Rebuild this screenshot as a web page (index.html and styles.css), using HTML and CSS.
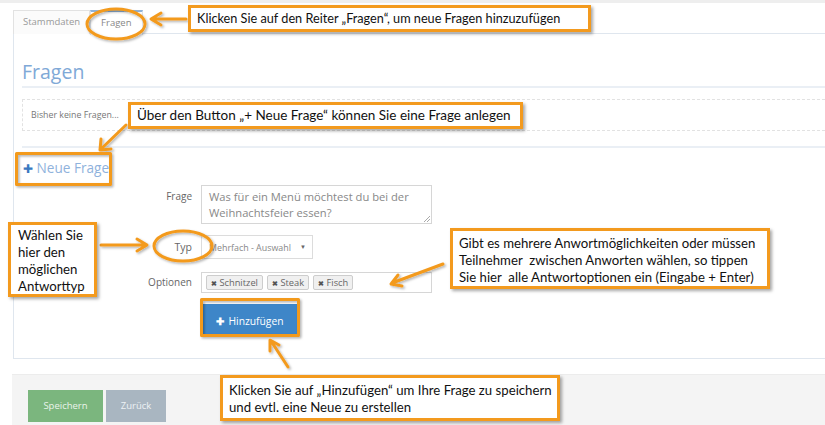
FILE: index.html
```html
<!DOCTYPE html>
<html lang="de">
<head>
<meta charset="utf-8">
<link rel="stylesheet" href="styles.css">
</head>
<body>
<div class="topstrip"></div>
<div class="page">
  <div class="tabs">
    <div class="tab">Stammdaten</div>
    <div class="tab active">Fragen</div>
  </div>
  <div class="panel">
    <h2 class="title">Fragen</h2>
    <div class="empty">Bisher keine Fragen...</div>
    <div class="sep"></div>
    <div class="newq"><span class="plus">✚</span> Neue Frage</div>
    <div class="form">
      <div class="row">
        <div class="label l-frage">Frage</div>
        <div class="textarea">Was für ein Menü möchtest du bei der<br>Weihnachtsfeier essen?<span class="grip"></span></div>
      </div>
      <div class="row">
        <div class="label l-typ">Typ</div>
        <div class="select"><span>Mehrfach - Auswahl</span><span class="caret">▼</span></div>
      </div>
      <div class="row">
        <div class="label l-opt">Optionen</div>
        <div class="tags">
          <span class="tag"><b>✖</b> Schnitzel</span>
          <span class="tag"><b>✖</b> Steak</span>
          <span class="tag"><b>✖</b> Fisch</span>
        </div>
      </div>
      <div class="row">
        <div class="label"></div>
        <div class="btn-add"><span class="bplus">✚</span> Hinzufügen</div>
      </div>
    </div>
  </div>
  <div class="footer">
    <div class="btn save">Speichern</div>
    <div class="btn back">Zurück</div>
  </div>
</div>

<svg class="overlay" width="825" height="425" viewBox="0 0 825 425">
  <defs>
    <filter id="sh" x="-20%" y="-20%" width="140%" height="140%">
      <feDropShadow dx="1.5" dy="1.5" stdDeviation="1.2" flood-color="#000" flood-opacity="0.3"/>
    </filter>
  </defs>
  <g fill="none" stroke="#f39a1e" stroke-width="3" stroke-linecap="round" stroke-linejoin="round" filter="url(#sh)">
    <ellipse cx="116" cy="24" rx="29" ry="15"/>
    <ellipse cx="183" cy="246" rx="29" ry="15"/>
    <rect x="16.5" y="153.5" width="94" height="31"/>
    <rect x="201.5" y="299.5" width="97" height="36"/>
    <path d="M186 19 L152 19 M161 13 L151 19 L161 25"/>
    <path d="M126 125 L101 149 M101 139 L100 150 L111 149"/>
    <path d="M101 245 L146 245 M137 239 L147 245 L137 251"/>
    <path d="M443 264 L392 283 M398 275 L391 284 L402 286"/>
    <path d="M288 367 L271 341 M270 351 L270 340 L279 345"/>
  </g>
</svg>

<div class="note n1">Klicken Sie auf den Reiter „Fragen“, um neue Fragen hinzuzufügen</div>
<div class="note n2">Über den Button „+ Neue Frage“ können Sie eine Frage anlegen</div>
<div class="note n3">Wählen Sie<br>hier den<br>möglichen<br>Antworttyp</div>
<div class="note n4">Gibt es mehrere Anwortmöglichkeiten oder müssen<br>Teilnehmer&nbsp; zwischen Anworten wählen, so tippen<br>Sie hier&nbsp; alle Antwortoptionen ein (Eingabe + Enter)</div>
<div class="note n5">Klicken Sie auf „Hinzufügen“ um Ihre Frage zu speichern<br>und evtl. eine Neue zu erstellen</div>
</body>
</html>
```

FILE: styles.css
```css
* { box-sizing: border-box; }
html, body { margin: 0; padding: 0; }
body {
  width: 825px;
  height: 425px;
  overflow: hidden;
  background: #fff;
  font-family: "Open Sans", "Noto Sans", sans-serif;
  position: relative;
  color: #555;
}
.topstrip { height: 3px; background: #eeeeee; }
.page { padding: 7px 0 0 13px; }

.tabs {
  display: flex;
  height: 24px;
  border-bottom: 1px solid #dfe6ee;
}
.tab {
  font-size: 9.5px;
  color: #999;
  line-height: 22px;
  padding: 0 9px;
  border: 1px solid #e2e2e2;
  border-bottom: none;
  background: #fbfbfb;
  height: 24px;
}
.tab.active {
  background: #fff;
  border-color: #dfe6ee;
  border-top: 2px solid #8fb2d8;
  color: #888;
  line-height: 21px;
  margin-bottom: -1px;
  height: 25px;
  padding: 0 10px;
}

.panel {
  display: flow-root;
  border-left: 1px solid #dfe6ee;
  border-bottom: 1px solid #dfe6ee;
  padding: 0 0 0 8px;
  height: 325px;
}
.title {
  margin: 24px 0 0 0;
  font-size: 19.5px;
  font-weight: 400;
  color: #80a9d7;
  line-height: 28px;
  border-bottom: 2px solid #eaeff5;
}
.empty {
  margin-top: 11px;
  height: 32px;
  border: 1px dashed #e2e2e2;
  border-right: none;
  font-size: 8.8px;
  color: #777;
  line-height: 30px;
  padding-left: 8px;
}
.sep {
  margin-top: 15px;
  border-top: 2px solid #eaeff5;
}
.newq {
  margin-top: 8px;
  font-size: 13.6px;
  line-height: 24px;
  color: #8fb2dc;
  padding-left: 1px;
}
.newq .plus { color: #3a78c0; font-size: 12px; }

.form { margin-top: 4px; display: flex; flex-direction: column; }
.row { display: flex; gap: 9px; align-items: flex-start; }
.label {
  width: 170px;
  text-align: right;
  font-size: 10px;
  color: #666;
}
.l-frage { padding-top: 4px; }
.l-typ { padding-top: 5px; font-size: 10.5px; }
.l-opt { padding-top: 3px; }
.textarea {
  position: relative;
  width: 231px;
  height: 39px;
  border: 1px solid #d6d6d6;
  font-size: 11.2px;
  color: #888;
  line-height: 16px;
  padding: 3px 0 0 7px;
  white-space: nowrap;
}
.grip {
  position: absolute;
  right: 1px; bottom: 1px;
  width: 6px; height: 6px;
  background: linear-gradient(135deg, transparent 45%, #aaa 46%, #aaa 55%, transparent 56%, transparent 70%, #aaa 71%, #aaa 80%, transparent 81%);
}
.row + .row { margin-top: 11px; }
.row:nth-child(3) { margin-top: 13px; }
.row:nth-child(4) { margin-top: 11px; }
.select {
  width: 112px;
  height: 24px;
  border: 1px solid #dcdcdc;
  font-size: 8.9px;
  color: #888;
  display: flex;
  align-items: center;
  justify-content: space-between;
  padding: 0 6px 0 7px;
}
.caret { font-size: 6px; color: #666; }
.tags {
  width: 231px;
  height: 21px;
  border: 1px solid #d6d6d6;
  display: flex;
  align-items: center;
  gap: 4px;
  padding-left: 4px;
}
.tag {
  font-size: 9.3px;
  color: #666;
  background: #f0f0f0;
  border: 1px solid #cdcdcd;
  border-radius: 2px;
  height: 15px;
  line-height: 13px;
  padding: 0 4px;
}
.tag b { font-size: 7px; color: #555; }
.btn-add {
  margin-left: 2px;
  width: 94px;
  height: 33px;
  background: #3e86c8;
  color: #fff;
  font-size: 10.3px;
  display: flex;
  align-items: center;
  justify-content: center;
  gap: 4px;
}
.bplus { font-size: 10px; font-weight: bold; }

.footer {
  margin-top: 15px;
  margin-left: -1px;
  height: 60px;
  background: #f4f4f4;
  border-top: 1px solid #ececec;
  display: flex;
  gap: 3px;
  padding: 15px 0 0 16px;
}
.btn {
  height: 32px;
  line-height: 32px;
  font-size: 9.5px;
  text-align: center;
}
.save { width: 75px; background: #7bb67e; color: #eaf4ea; }
.back { width: 60px; background: #a9b6c1; color: #eef2f5; }

.overlay {
  position: absolute;
  left: 0; top: 0;
  pointer-events: none;
}
.note {
  position: absolute;
  background: #fff;
  border: 3px solid #f39a1e;
  box-shadow: 2px 2px 3px rgba(0,0,0,0.35);
  font-family: Lato, "Open Sans", sans-serif;
  font-size: 13.2px;
  color: #111;
  line-height: 17px;
  white-space: nowrap;
}
.n1 { left: 188px; top: 5px; width: 403px; height: 27px; padding: 2px 0 0 6px; font-size: 12.7px; }
.n2 { left: 128px; top: 102px; width: 395px; height: 27px; padding: 2px 0 0 6px; font-size: 13.5px; }
.n3 { left: 8px; top: 222px; width: 89px; height: 75px; padding: 2px 0 0 7px; }
.n4 { left: 450px; top: 228px; width: 320px; height: 61px; padding: 4px 0 0 6px; }
.n5 { left: 220px; top: 375px; width: 340px; height: 46px; padding: 4px 0 0 6px; }
```
